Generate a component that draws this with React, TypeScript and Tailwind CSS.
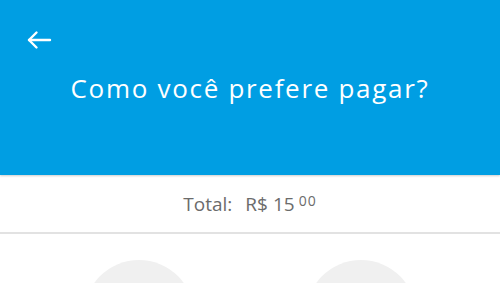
const options = ["a", "b"];

export default function App() {
  return (
    <div className="w-[500px] h-[283px] overflow-hidden bg-white font-['Open_Sans',sans-serif]">
      <header className="h-[175px] bg-[#009ee3] shadow-[0_1px_2px_rgba(0,0,0,0.2)] relative z-10">
        <div className="pt-[30px] pl-[26px]">
          <svg width="26" height="20" viewBox="0 0 26 20" fill="none" stroke="white" strokeWidth="2.4" strokeLinecap="round" strokeLinejoin="round">
            <path d="M3 10h21" />
            <path d="M10.5 2.5L3 10l7.5 7.5" />
          </svg>
        </div>
        <h1 className="mt-[25px] text-center text-[26px] tracking-[1.7px] text-white leading-none">
          Como você prefere pagar?
        </h1>
      </header>

      <div className="h-[59px] border-b-2 border-[#e2e2e2] flex items-center justify-center text-[19px] text-[#6b6b6b] pt-[1px]">
        <span>Total:</span>
        <span className="ml-[13px]">R$ 15</span>
        <span className="ml-[4px] text-[14px] tracking-[1px] self-start mt-[14px]">00</span>
      </div>

      <div className="grid grid-cols-2 px-[28px] pt-[26px]">
        {options.map((o) => (
          <div key={o} className="flex justify-center">
            <div className="h-[110px] w-[110px] rounded-full bg-[#f0f0f0]" />
          </div>
        ))}
      </div>
    </div>
  );
}
